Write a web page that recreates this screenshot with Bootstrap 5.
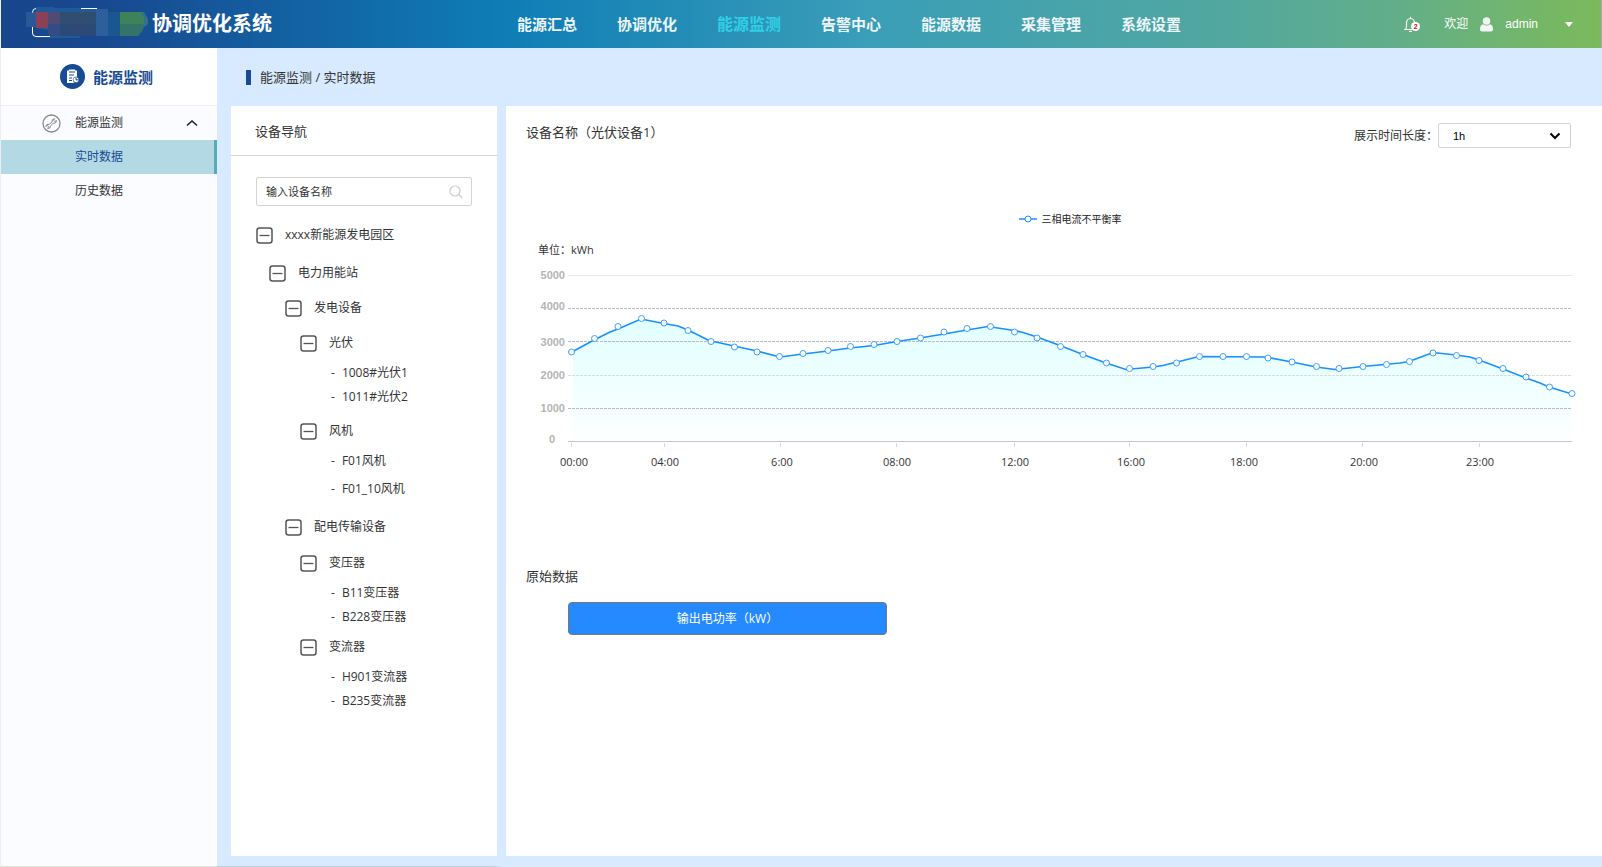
<!DOCTYPE html>
<html lang="zh-CN">
<head>
<meta charset="utf-8">
<meta name="viewport" content="width=device-width, initial-scale=1">
<title>协调优化系统 - 实时数据</title>
<link href="https://cdn.jsdelivr.net/npm/bootstrap@5.3.0/dist/css/bootstrap.min.css" rel="stylesheet">
<style>
  body {
    font-family: "Open Sans", "Noto Sans CJK SC", sans-serif;
    font-size: 12px;
    line-height: 16px;
    color: #333;
    background: #d8eaff;
    border-left: 1px solid #eee;
  }
  a { color: inherit; text-decoration: none; }
  svg { display: block; flex-shrink: 0; }

  /* top bar */
  .topbar {
    height: 48px;
    color: #fff;
    background: linear-gradient(90deg, #18468c 0%, #18488f 6%, #0e7cb6 31%, #3a9eb8 54%, #50a7a2 75%, #62ae8a 87%, #7cba5a 100%);
    border-right: 1px solid #aaa;
  }
  .brand { width: 492px; padding-left: 25px; }
  .brand-name { font-size: 20px; line-height: 28px; font-weight: 700; }
  .main-nav { gap: 40px; font-size: 15px; line-height: 44px; font-weight: 700; color: #eef5f8; }
  .main-nav .current { color: #2fd0e6; font-size: 16px; }
  .user-area { padding-right: 28px; }
  .user-name { font-family: "Liberation Sans", sans-serif; }
  .bell-count {
    right: 0; bottom: 2px; width: 9px; height: 9px;
    font: 700 7px/9px "Liberation Sans", sans-serif;
    color: #e0002d; background: #fff; text-align: center;
  }

  /* side bar */
  .sidebar { width: 216px; background: #fbfcff; border-bottom: 1px solid #ddd; }
  .side-title { height: 58px; padding-left: 59px; background: #fff; border-bottom: 1px solid #eee; font-size: 15px; line-height: 20px; font-weight: 700; color: #174b93; }
  .side-item { height: 34px; padding-left: 74px; }
  .side-group { gap: 14px; padding: 0 19px 0 41px; width: 100%; border: 0; background: none; color: inherit; }
  .side-item.current { color: #174b93; background: #b3d9e4; border-right: 3px solid #58adb5; }

  /* page body */
  .page { padding: 0 0 11px 14px; background: linear-gradient(90deg, #bccfe2 96%, transparent) no-repeat left bottom / 287px 1px; }
  .crumbs { height: 58px; padding-left: 15px; font-size: 13px; }
  .crumbs::before { content: ""; width: 5px; height: 15px; margin-right: 9px; background: #174b93; }
  .panels { gap: 9px; }
  .panel { background: #fff; }
  .device-panel { width: 266px; flex-shrink: 0; }
  .panel-title { font-size: 13px; line-height: 20px; font-weight: 400; margin: 0; }
  .device-head { height: 50px; padding: 0 24px; border-bottom: 1px solid #d6d6d6; }
  .device-body { padding: 21px 25px 0; }
  .search-box { height: 29px; border: 1px solid #d4d4d4; border-radius: 2px; padding: 0 8px 0 9px; }
  .search-box input { font-size: 11px; line-height: 16px; color: #333; border: 0; outline: 0; padding: 0; background: none; min-width: 0; }
  .search-box input::placeholder { color: #333; opacity: 1; }

  /* device tree */
  .tree { margin-top: 9px; }
  .tree ul { list-style: none; margin: 0; padding: 0; }
  .node { gap: 12px; width: 100%; padding: 0; border: 0; background: none; color: inherit; text-align: left; height: 36px; }
  .node-root { height: 40px; }
  .node-class { height: 34px; }
  .in-1 { padding-left: 13px; }
  .in-2 { padding-left: 29px; }
  .in-3 { padding-left: 44px; }
  .leaf { height: 24px; padding-left: 75px; gap: 7px; }
  .leaf::before { content: "-"; }

  /* chart */
  .chart-panel { padding: 16px 20px 0; min-width: 0; }
  .span-field { padding: 1px 11px 0 0; }
  .span-select { appearance: none; width: 133px; height: 25px; padding: 0 12px 0 14px; font: 11px/16px "Liberation Sans", sans-serif; color: #000; border: 1px solid #d4d4d4; border-radius: 2px;
    background: #fff url("data:image/svg+xml,%3Csvg xmlns='http://www.w3.org/2000/svg' viewBox='0 0 12 8'%3E%3Cpath d='M1.500 1.500 6 6l4.500-4.500' fill='none' stroke='%23000' stroke-width='2'/%3E%3C/svg%3E") no-repeat right 9px center / 12px 8px; }
  .legend-row { margin-top: 63px; padding: 0 10px 0 42px; font-size: 10px; gap: 5px; color: #222; }
  .unit-label { font-size: 11px; margin-top: 15px; padding-left: 12px; }
  .chart { width: 100%; height: auto; margin-top: 7px; }
  .chart text { font-size: 11px; text-anchor: middle; fill: #333; }
  .chart .y-axis text { font-family: "Liberation Sans", sans-serif; font-weight: 700; text-anchor: end; fill: #b4b4b4; }
  .raw-title { margin-top: 93px; }
  .raw-btn { width: 319px; height: 33px; margin: 16px 0 0 42px; padding: 0; font-size: 12px; line-height: 16px; color: #fff; background: #2589ff; border: 1px solid #777; border-radius: 4px; }
  .raw-btn:hover { color: #fff; background: #1a7af0; }
</style>
</head>
<body class="d-flex flex-column min-vh-100">

<svg width="0" height="0" class="position-absolute" aria-hidden="true">
  <symbol id="minus-box" viewBox="0 0 17 17">
    <rect x="1" y="1" width="15" height="15" rx="2.500" fill="#fff" stroke="#555" stroke-width="1.500"/>
    <path d="M3.500 8.500h10" stroke="#555" stroke-width="1.300"/>
  </symbol>
</svg>

<header class="topbar d-flex align-items-center">
  <div class="brand d-flex align-items-center flex-shrink-0">
    <svg width="126" height="48" viewBox="26 0 126 48" aria-hidden="true">
      <path d="M36 7h18v1h44v28H80v2H36z" fill="#215a9a"/>
      <path d="M26 12h10v15H26z" fill="#2a5796"/>
      <path d="M36 12h12v16H36z" fill="#8c4055"/>
      <path d="M48 12h12v12H48z" fill="#514a74"/>
      <path d="M60 12h36v12H60z" fill="#304e71"/>
      <path d="M48 24h12v12H48z" fill="#344c86"/>
      <path d="M60 24h36v12H60z" fill="#2b4a77"/>
      <path d="M36 28l12 2v6H34z" fill="#18488f"/>
      <path d="M96 9h12v27H96z" fill="#2d5f9e"/>
      <path d="M108 12h12v24h-12z" fill="#1a568f"/>
      <path d="M136 12h8l4 7v5l-6 5h-6z" fill="#32708c"/>
      <path d="M120 12h21l3 6v6h-24z" fill="#3d8258"/>
      <path d="M120 24h24l-1 6-5 6h-18z" fill="#347468"/>
      <path d="M36 8.500q-3.500 0-3.500 4M32.500 27v6q0 3.500 3.500 3.500h14M81 8.500h16" fill="none" stroke="#fff"/>
    </svg>
    <span class="brand-name">协调优化系统</span>
  </div>
  <nav class="main-nav d-flex flex-grow-1 text-nowrap ps-4" aria-label="主导航">
    <a href="#">能源汇总</a>
    <a href="#">协调优化</a>
    <a href="#" class="current" aria-current="page">能源监测</a>
    <a href="#">告警中心</a>
    <a href="#">能源数据</a>
    <a href="#">采集管理</a>
    <a href="#">系统设置</a>
  </nav>
  <div class="user-area d-flex align-items-center text-nowrap">
    <a href="#" class="position-relative me-4" aria-label="告警">
      <svg width="17" height="17" viewBox="0 0 17 17" fill="none" stroke="#f1f6f4" stroke-width="1.200"><path d="M1 13.500h13M2.500 13.500q1-1 1-3.500V7Q3.500 2.700 7.500 2.500q4 .2 4 4.500v6M7.500 2.500V.8M6 15.300h3"/></svg>
      <span class="bell-count position-absolute rounded-circle">2</span>
    </a>
    <span>欢迎</span>
    <svg class="mx-2 px-1" width="21" height="15" viewBox="0 0 13 15" fill="#f1f6f4"><circle cx="6.500" cy="4" r="3.800"/><path d="M0 12.500Q0 7.500 3.200 7.200 6.500 9.800 9.800 7.200 13 7.500 13 12.500 13 14.500 11 14.500H2Q0 14.500 0 12.500z"/></svg>
    <span class="user-name">admin</span>
    <svg class="ms-4" width="11" height="5" viewBox="-3 0 11 5" fill="#fff"><path d="M0 0h8L4 5z"/></svg>
  </div>
</header>

<div class="d-flex flex-grow-1">
  <aside class="sidebar flex-shrink-0">
    <div class="side-title d-flex align-items-center gap-2">
      <svg width="25" height="25" viewBox="0 0 25 25"><circle cx="12.500" cy="12.500" r="12.500" fill="#174b93"/><path d="M7 6.500h2V5.500h6v1h2V13a4 4 0 0 0-3 6H7z" fill="#fff"/><path d="M9 8h6M9 11h5M9 14h3M9 16.500h3" stroke="#174b93" stroke-width="1.200"/><circle cx="16" cy="15.800" r="2.900" fill="#fff" stroke="#174b93" stroke-width=".6"/><path d="M16 13.500v2.300h2.600" fill="none" stroke="#174b93"/></svg>
      <span>能源监测</span>
    </div>
    <button type="button" class="side-item side-group d-flex align-items-center" aria-expanded="true">
      <svg width="19" height="19" viewBox="0 0 19 19" fill="none" stroke="#888"><circle cx="9.500" cy="9.500" r="8.500" stroke-width="1.300"/><path d="M10 8.200Q9.500 5 12.500 4.600L11.700 6.500l.9.900 2-.8q-.2 3-3.400 2.800L8.500 12q.3 2.600-2.800 2.500l.9-2-.9-.9-2 .8Q4.200 9.500 7 10.600z"/></svg>
      <span>能源监测</span>
      <svg class="ms-auto" width="12" height="8" viewBox="0 0 12 8" fill="none" stroke="#222" stroke-width="1.600"><path d="M1 6.500l5-4.500 5 4.500"/></svg>
    </button>
    <a href="#" class="side-item current d-flex align-items-center" aria-current="page">实时数据</a>
    <a href="#" class="side-item d-flex align-items-center">历史数据</a>
  </aside>

  <main class="page flex-grow-1 d-flex flex-column">
    <div class="crumbs d-flex align-items-center">能源监测 / 实时数据</div>
    <div class="panels d-flex flex-grow-1">
      <section class="panel device-panel">
        <div class="device-head d-flex align-items-center"><h2 class="panel-title">设备导航</h2></div>
        <div class="device-body">
          <div class="search-box d-flex align-items-center">
            <input type="text" class="flex-grow-1" placeholder="输入设备名称" aria-label="输入设备名称">
            <svg width="14" height="14" viewBox="0 0 14 14" fill="none" stroke="#ccc" stroke-width="1.200"><circle cx="6" cy="6" r="5"/><path d="M9.800 9.800l3.500 3.200"/></svg>
          </div>
          <div class="tree">
            <button type="button" class="node node-root d-flex align-items-center"><svg width="17" height="17"><use href="#minus-box"/></svg>xxxx新能源发电园区</button>
            <button type="button" class="node in-1 d-flex align-items-center"><svg width="17" height="17"><use href="#minus-box"/></svg>电力用能站</button>

            <button type="button" class="node node-class in-2 d-flex align-items-center"><svg width="17" height="17"><use href="#minus-box"/></svg>发电设备</button>
            <button type="button" class="node in-3 d-flex align-items-center"><svg width="17" height="17"><use href="#minus-box"/></svg>光伏</button>
            <ul class="pb-1">
              <li><a href="#" class="leaf d-flex align-items-center">1008#光伏1</a></li>
              <li><a href="#" class="leaf d-flex align-items-center">1011#光伏2</a></li>
            </ul>
            <button type="button" class="node in-3 d-flex align-items-center"><svg width="17" height="17"><use href="#minus-box"/></svg>风机</button>
            <ul class="pb-2">
              <li class="pb-1"><a href="#" class="leaf d-flex align-items-center">F01风机</a></li>
              <li><a href="#" class="leaf d-flex align-items-center">F01_10风机</a></li>
            </ul>

            <button type="button" class="node in-2 d-flex align-items-center"><svg width="17" height="17"><use href="#minus-box"/></svg>配电传输设备</button>
            <button type="button" class="node in-3 d-flex align-items-center"><svg width="17" height="17"><use href="#minus-box"/></svg>变压器</button>
            <ul>
              <li><a href="#" class="leaf d-flex align-items-center">B11变压器</a></li>
              <li><a href="#" class="leaf d-flex align-items-center">B228变压器</a></li>
            </ul>
            <button type="button" class="node in-3 d-flex align-items-center"><svg width="17" height="17"><use href="#minus-box"/></svg>变流器</button>
            <ul>
              <li><a href="#" class="leaf d-flex align-items-center">H901变流器</a></li>
              <li><a href="#" class="leaf d-flex align-items-center">B235变流器</a></li>
            </ul>
          </div>
        </div>
      </section>

      <section class="panel chart-panel flex-grow-1">
        <div class="d-flex justify-content-between align-items-start">
          <h2 class="panel-title">设备名称（光伏设备1）</h2>
          <div class="span-field d-flex align-items-center">
            <label for="span">展示时间长度：</label>
            <select id="span" class="span-select">
              <option>1h</option>
              <option>6h</option>
              <option>24h</option>
            </select>
          </div>
        </div>

        <div class="legend-row d-flex justify-content-center align-items-center">
          <svg width="18" height="8" viewBox="0 0 18 8"><path d="M0 4h18" stroke="#1890ff" stroke-width="1.500"/><circle cx="9" cy="4" r="3" fill="#fff" stroke="#1890ff"/></svg>
          <span>三相电流不平衡率</span>
        </div>
        <div class="unit-label">单位：kWh</div>

        <svg class="chart" viewBox="526 265 1056 208" role="img" aria-label="三相电流不平衡率">
          <defs>
            <linearGradient id="area-fill" x1="0" y1="0" x2="0" y2="1">
              <stop offset="0" stop-color="#e0ffff"/>
              <stop offset="1" stop-color="#fdffff"/>
            </linearGradient>
            <marker id="dot" viewBox="0 0 8 8" refX="4" refY="4" markerWidth="8" markerHeight="8" markerUnits="userSpaceOnUse">
              <circle cx="4" cy="4" r="3" fill="#fff" stroke="#3ba0ff"/>
            </marker>
          </defs>
          <path fill="url(#area-fill)" d="M573 441V352L594 340 618 329 641 319 664 323 688 330 709 340 757 351 780 357 874 345 920 338 967 330 988 326 1023 332 1060 345 1106 363 1126 369 1163 365 1199 356 1265 357 1335 369 1400 363 1433 352 1470 357 1503 369 1549 387 1571 394V441z"/>
          <path d="M568 275.500H1572" stroke="#e8e8e8"/>
          <path d="M568 308.500H1572M568 341.500H1572M568 408.500H1572" stroke="#b9bcc6" stroke-dasharray="3 1"/>
          <path d="M568 375.500H1572" stroke="#d3dfe2" stroke-dasharray="3 1"/>
          <path d="M568 441.500H1572" stroke="#c4c6cd"/>
          <path d="M571.500 443v4M664.500 443v4M780.500 443v4M896.500 443v4M1014.500 443v4M1129.500 443v4M1246.500 443v4M1362.500 443v4M1479.500 443v4" stroke="#d5d8de"/>
          <polyline fill="none" stroke="#1890ff" stroke-width="1.600" points="571,352.5 594,340 610,332 618,329 641,319 664,323.5 678,326 688,330 709,340.5 734,346 757,351 780,357 803,354 828,351 850,348 874,345.5 897,341.5 920,338 944,334 967,330 988,326.5 1014,330.5 1023,332.5 1037,337 1060,345.5 1083,354.5 1106,363 1126,369.5 1153,367 1163,365.5 1199,356.5 1265,357 1292,362 1316,367 1335,369.5 1363,366.5 1400,363 1409,361.5 1433,352.5 1456,355 1470,357 1479,360 1503,369 1526,378 1540,383 1549,387 1572,394"/>
          <polyline fill="none" stroke="none" marker-start="url(#dot)" marker-mid="url(#dot)" marker-end="url(#dot)" points="571.5,352 594.5,338.5 618,326.5 641.5,318.5 664,323 688,330.5 711,341.5 734.5,347 757,352 779.5,356.5 803,353.5 828,350.5 850.5,346.5 874,344.5 897,341.5 920.5,338 944,332 967,328.5 990.5,326.5 1014.5,332 1037,338 1060.5,346.5 1083,354.5 1106.5,363 1129.5,368.5 1153,366.5 1176.5,363 1199.5,356.5 1223,356.5 1246.5,356.5 1268,358 1292,362 1316.5,366.5 1339,368.5 1363,366.5 1386.5,364.5 1409.5,361.5 1433,353 1456.5,355.5 1479,360.5 1503,368.5 1526,377 1549.5,387 1572,393.5"/>
          <g class="y-axis">
            <text x="565" y="279">5000</text>
            <text x="565" y="310">4000</text>
            <text x="565" y="346">3000</text>
            <text x="565" y="379">2000</text>
            <text x="565" y="412">1000</text>
            <text x="555" y="443">0</text>
          </g>
          <g>
            <text x="574" y="466">00:00</text>
            <text x="665" y="466">04:00</text>
            <text x="782" y="466">6:00</text>
            <text x="897" y="466">08:00</text>
            <text x="1015" y="466">12:00</text>
            <text x="1131" y="466">16:00</text>
            <text x="1244" y="466">18:00</text>
            <text x="1364" y="466">20:00</text>
            <text x="1480" y="466">23:00</text>
          </g>
        </svg>

        <h2 class="panel-title raw-title">原始数据</h2>
        <button type="button" class="btn raw-btn">输出电功率（kW）</button>
      </section>
    </div>
  </main>
</div>

<script src="https://cdn.jsdelivr.net/npm/bootstrap@5.3.0/dist/js/bootstrap.bundle.min.js"></script>
</body>
</html>
